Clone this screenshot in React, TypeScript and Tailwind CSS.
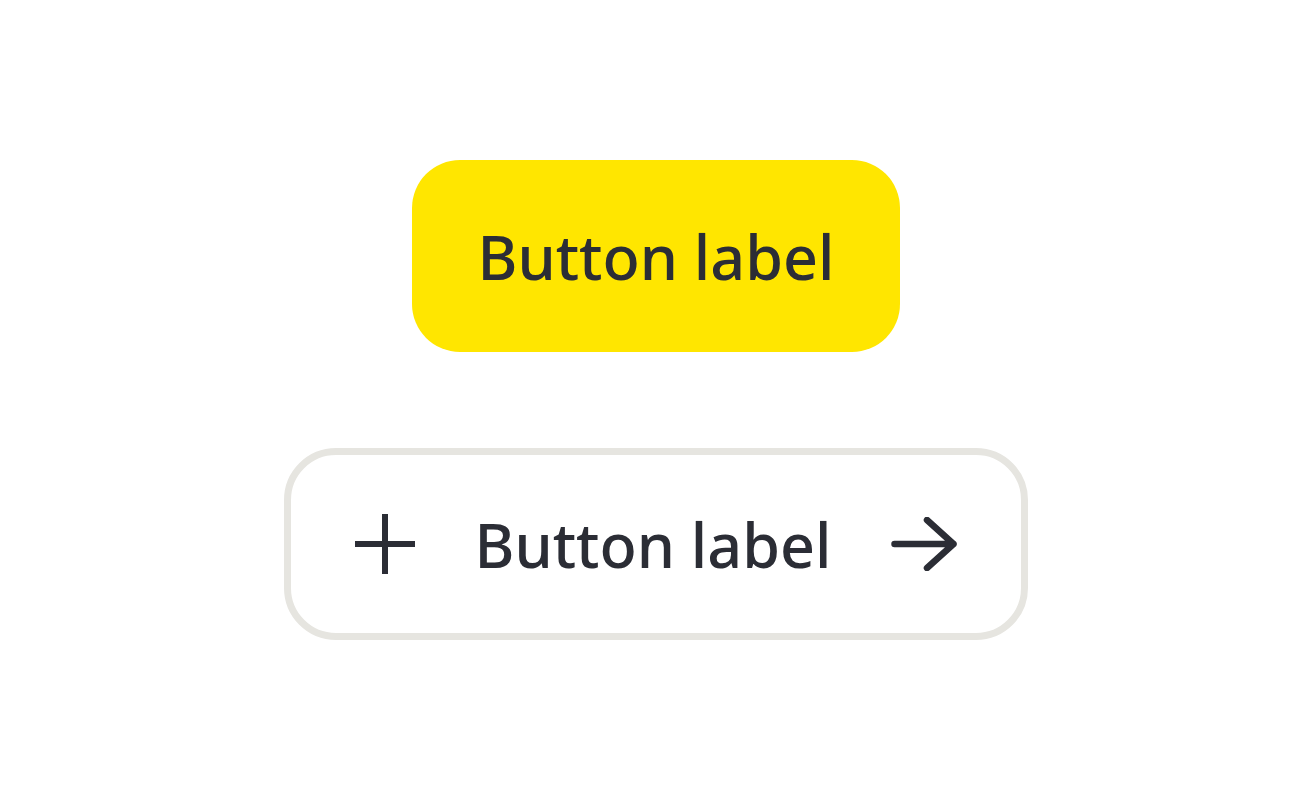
export default function App() {
  return (
    <div className="flex min-h-[800px] flex-col items-center justify-center gap-24 bg-white font-['Noto_Sans',sans-serif] text-[#2b2d35]">
      <button className="flex h-[192px] w-[488px] items-center justify-center rounded-[48px] bg-[#ffe600] text-[61px] font-medium leading-none">
        Button label
      </button>
      <button className="flex h-[192px] w-[744px] items-center justify-center gap-[60px] rounded-[52px] border-[7px] border-[#e6e5e0] bg-white text-[61px] font-medium leading-none">
        <svg width="60" height="60" viewBox="0 0 60 60" fill="none" stroke="currentColor" strokeWidth="6">
          <path d="M30 0v60M0 30h60" />
        </svg>
        <span>Button label</span>
        <svg width="66" height="54" viewBox="0 0 66 54" fill="none" stroke="currentColor" strokeWidth="6.5" strokeLinecap="round" strokeLinejoin="round">
          <path d="M3.5 27h59M36 3l26.5 24L36 51" />
        </svg>
      </button>
    </div>
  )
}
